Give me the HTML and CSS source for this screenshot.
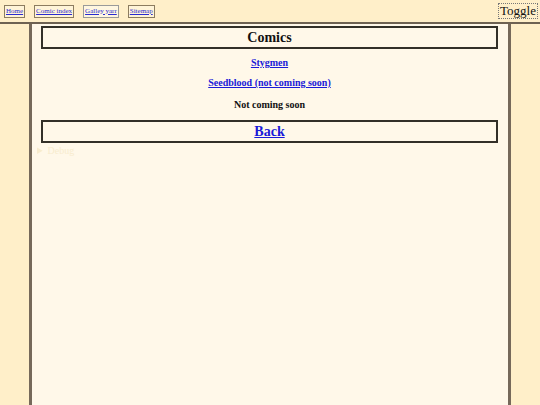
FILE: index.html
```html
<!DOCTYPE html>
<html>
<head>
<meta charset="utf-8">
<link rel="stylesheet" href="styles.css">
</head>
<body>
<header class="topbar">
  <nav class="nav">
    <a class="navlink" href="#">Home</a>
    <a class="navlink" href="#">Comic index</a>
    <a class="navlink navlink-active" href="#">Galley yarr</a>
    <a class="navlink" href="#">Sitemap</a>
  </nav>
  <button class="toggle">Toggle</button>
</header>
<main class="column">
  <h1 class="boxed title">Comics</h1>
  <p class="item item-first"><a href="#">Stygmen</a></p>
  <p class="item"><a href="#">Seedblood (not coming soon)</a></p>
  <p class="item item-plain">Not coming soon</p>
  <div class="boxed back"><a href="#">Back</a></div>
  <details class="debug"><summary>Debug</summary></details>
</main>
</body>
</html>
```
FILE: styles.css
```css
html, body {
  margin: 0;
  padding: 0;
  height: 100%;
}
body {
  background: #ffefc9;
  font-family: "Liberation Serif", "Times New Roman", serif;
  display: flex;
  flex-direction: column;
  overflow: hidden;
}
.topbar {
  height: 22px;
  border-bottom: 2px solid #6e6252;
  display: flex;
  align-items: center;
  justify-content: space-between;
  padding: 0 2px 0 4px;
  flex: none;
}
.nav {
  display: flex;
  gap: 9px;
  align-items: center;
}
.navlink {
  font-size: 7px;
  line-height: 11px;
  color: #2a2ad0;
  border: 1px solid #8c7c60;
  padding: 0 1px;
  background: #fff4d8;
}
.navlink-active {
  border-color: #9a9a9a;
  background: #fff6e0;
}
.toggle {
  font-family: "Liberation Serif", "Times New Roman", serif;
  font-size: 13px;
  line-height: 14px;
  padding: 0 1px;
  background: transparent;
  border: 1px dotted #777;
  color: #111;
  margin: 0;
}
.column {
  width: 482px;
  box-sizing: border-box;
  margin: 0 auto;
  flex: 1;
  background: #fff8e9;
  border-left: 3px solid #76695a;
  border-right: 3px solid #76695a;
  padding: 2px 10px 0 9px;
}
.boxed {
  border: 2px solid #333028;
  text-align: center;
  margin: 0;
}
.title {
  font-size: 14px;
  line-height: 19px;
  font-weight: bold;
  color: #111;
}
.item {
  margin: 6px 0 0;
  text-align: center;
  font-size: 10px;
  line-height: 14px;
  font-weight: bold;
}
.item-first {
  margin-top: 7px;
}
.item-plain {
  margin-top: 8px;
  color: #111;
}
a {
  color: #1a1ad8;
  text-decoration: underline;
}
.back {
  margin-top: 8px;
  font-size: 14px;
  line-height: 19px;
  font-weight: bold;
}
.debug {
  font-size: 10px;
  line-height: 13px;
  color: #f8ecce;
  margin-top: 1px;
  margin-left: -4px;
}
.debug summary {
  cursor: pointer;
}
```
